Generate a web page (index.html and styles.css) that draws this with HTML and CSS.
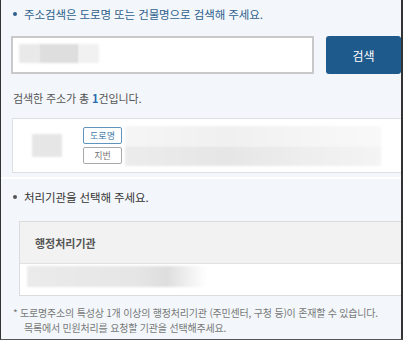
FILE: index.html
```html
<!DOCTYPE html>
<html lang="ko">
<head>
    <meta charset="UTF-8">
    <title>주소검색</title>
    <link rel="stylesheet" href="styles.css">
</head>
<body>
    <div class="frame">
        <section class="search">
            <p class="guide"><span class="dot"></span>주소검색은 도로명 또는 건물명으로 검색해 주세요.</p>
            <div class="search-row">
                <div class="search-input">
                    <span class="blur b1"></span><span class="blur b2"></span><span class="blur b3"></span>
                </div>
                <button class="search-btn">검색</button>
            </div>
            <p class="count">검색한 주소가 총 <b>1</b>건입니다.</p>
            <div class="result">
                <span class="blur zip"></span>
                <div class="tags">
                    <span class="tag road">도로명</span>
                    <span class="tag lot">지번</span>
                </div>
                <div class="addr">
                    <span class="blur line1"></span>
                    <span class="blur line2"></span>
                </div>
            </div>
        </section>

        <section class="agency">
            <p class="guide dark"><span class="dot"></span>처리기관을 선택해 주세요.</p>
            <div class="agency-table">
                <div class="agency-head">행정처리기관</div>
                <div class="agency-row"><span class="blur org"></span></div>
            </div>
            <p class="note">* 도로명주소의 특성상 1개 이상의 행정처리기관 (주민센터, 구청 등)이 존재할 수 있습니다.<br>목록에서 민원처리를 요청할 기관을 선택해주세요.</p>
        </section>
    </div>
</body>
</html>
```

FILE: styles.css
```css
* {
    box-sizing: border-box;
}

body {
    margin: 0;
    font-family: "Noto Sans CJK KR", "Noto Sans", sans-serif;
    background-color: #fff;
}

.frame {
    width: 403px;
    height: 340px;
    overflow: hidden;
    background-color: #f3f7fb;
    border-left: 1px solid #333;
    border-right: 2px solid #333;
    border-bottom: 1px solid #555;
}

.search {
    padding: 6px 0 0 10px;
}

.guide {
    margin: 0;
    font-size: 11.5px;
    letter-spacing: -0.1px;
    color: #2e5f8c;
    display: flex;
    align-items: center;
}

.guide.dark {
    color: #333;
}

.dot {
    width: 4px;
    height: 4px;
    border-radius: 50%;
    background-color: #2e5f8c;
    margin: 0 7px 0 2px;
}

.guide.dark .dot {
    background-color: #555;
}

.search-row {
    display: flex;
    margin-top: 14px;
}

.search-input {
    width: 315px;
    height: 38px;
    background-color: #fff;
    border: 2px solid #c9c9c9;
    padding: 6px 0 0 6px;
    display: flex;
}

.blur {
    display: block;
    filter: blur(1px);
}

.b1 { width: 20px; height: 19px; background-color: #e9e9e9; }
.b2 { width: 40px; height: 19px; background-color: #dedede; }
.b3 { width: 20px; height: 19px; background-color: #f1f1f1; }

.search-btn {
    margin-left: 12px;
    width: 75px;
    height: 38px;
    border: none;
    border-radius: 3px;
    background-color: #1f5a8d;
    color: #fff;
    font-family: inherit;
    font-size: 12px;
    flex-shrink: 0;
}

.count {
    margin: 16px 0 0 2px;
    font-size: 11px;
    letter-spacing: -0.1px;
    color: #555;
}

.count b {
    color: #2a6bb0;
}

.result {
    margin-top: 12px;
    margin-left: 1px;
    width: 400px;
    height: 55px;
    background-color: #fff;
    border: 1px solid #dcdfe3;
    display: flex;
    align-items: center;
}

.zip {
    width: 30px;
    height: 23px;
    margin-left: 19px;
    background-color: #e6e6e6;
}

.tags {
    display: flex;
    flex-direction: column;
    gap: 3px;
    margin-left: 21px;
}

.tag {
    display: block;
    width: 39px;
    height: 17px;
    border-radius: 2px;
    font-size: 9px;
    line-height: 15px;
    text-align: center;
    background-color: #fff;
}

.tag.road {
    border: 1px solid #5e94bd;
    color: #3f7bab;
}

.tag.lot {
    border: 1px solid #a9a9a9;
    color: #777;
}

.addr {
    margin-left: 3px;
    display: flex;
    flex-direction: column;
}

.line1 {
    width: 256px;
    height: 20px;
    background: linear-gradient(90deg, #f6f6f6, #f0f0f0 40%, #f5f5f5 70%, #f9f9f9);
}

.line2 {
    width: 256px;
    height: 20px;
    background: linear-gradient(90deg, #ececec, #e6e6e6 40%, #eeeeee 70%, #f4f4f4);
}

.agency {
    margin-top: 4px;
    border-top: 2px solid #fff;
    padding: 10px 0 0 10px;
}

.agency-table {
    margin: 16px 0 0 8px;
    width: 400px;
    border: 1px solid #dcdcdc;
    background-color: #fff;
}

.agency-head {
    height: 42px;
    background-color: #f2f2f2;
    border-bottom: 1px solid #e2e2e2;
    padding-left: 15px;
    font-size: 11px;
    font-weight: bold;
    line-height: 42px;
    color: #555;
}

.agency-row {
    height: 31px;
    padding: 2px 0 0 7px;
}

.org {
    width: 180px;
    height: 21px;
    background: linear-gradient(90deg, #ebebeb, #e6e6e6 60%, #dedede 78%, #f1f1f1 90%, #fff);
}

.note {
    margin: 10px 0 0 2px;
    padding-left: 11px;
    text-indent: -11px;
    font-size: 10px;
    line-height: 14.5px;
    letter-spacing: -0.2px;
    color: #777;
}
```
